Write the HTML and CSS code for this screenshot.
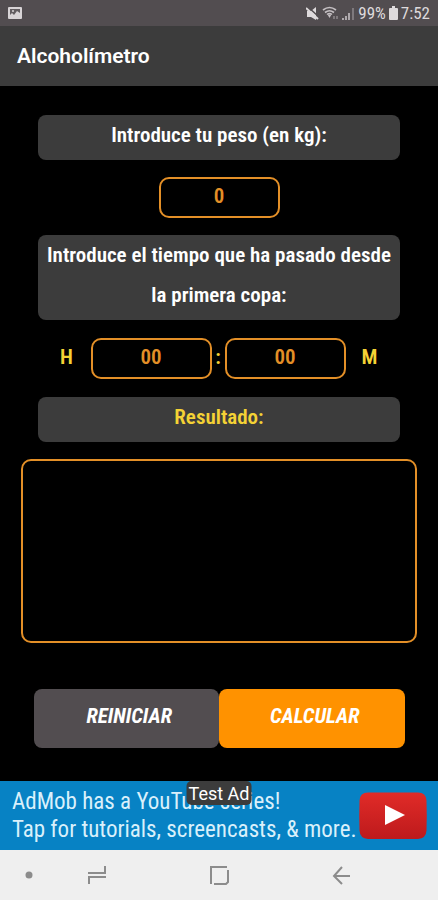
FILE: index.html
```html
<!DOCTYPE html>
<html lang="es">
<head>
<meta charset="utf-8">
<meta name="viewport" content="width=device-width, initial-scale=1">
<title>Alcoholímetro</title>
<link rel="stylesheet" href="styles.css">
</head>
<body>
<div class="status">
  <svg class="status-picture" width="14" height="12" viewBox="0 0 14 12" aria-hidden="true"><rect width="14" height="12" rx="1" fill="#d8d4d6"/><path d="M2 2h10v4L9 4 6 8 4 6 2 8z" fill="#625d60"/><circle cx="5" cy="4" r="1" fill="#d8d4d6"/></svg>
  <div class="status-right">
    <svg width="13" height="13" viewBox="0 0 13 13" aria-hidden="true"><path d="M1 4h4l5-4v13L5 10H1z" fill="#dedadc"/><path d="M2 0l11 10" stroke="#524d50" stroke-width="1.500"/><path d="M0 1l12 11" stroke="#dedadc" stroke-width="2"/></svg>
    <svg width="17" height="14" viewBox="0 0 17 14" fill="none" stroke="#c5c0c3" stroke-width="1.600" aria-hidden="true"><path d="M1 4q6.500-5 13 0M3 6.500q4.500-3.500 9 0M5 8.500q2.500-2 5 0"/><path d="M5.500 8.500h4L7.500 12z" fill="#c5c0c3" stroke="none"/><path d="M12 10v3M15 10v3" stroke="#8b8689"/></svg>
    <svg width="13" height="13" viewBox="0 0 13 13" stroke="#c5c0c3" stroke-width="1.600" aria-hidden="true"><path d="M1 11v2M4 9v4M7 6v7"/><path d="M11 1v12" stroke="#8b8689"/></svg>
    <span>99%</span>
    <svg width="9" height="14" viewBox="0 0 9 14" aria-hidden="true"><path d="M3 0h3v2h2q1 0 1 1v10q0 1-1 1H1q-1 0-1-1V3q0-1 1-1h2z" fill="#dedadc"/></svg>
    <span>7:52</span>
  </div>
</div>
<header class="appbar"><h1>Alcoholímetro</h1></header>
<main>
  <form class="form">
    <label class="panel" for="peso">Introduce tu peso (en kg):</label>
    <input class="field" id="peso" type="text" inputmode="decimal" value="0">
    <label class="panel" for="horas">Introduce el tiempo que ha pasado desde la primera copa:</label>
    <div class="time">
      <label class="unit" for="horas">H</label>
      <input class="field" id="horas" type="text" inputmode="numeric" value="00">
      <span class="colon">:</span>
      <input class="field" id="minutos" type="text" inputmode="numeric" value="00">
      <label class="unit" for="minutos">M</label>
    </div>
    <label class="panel panel-result" for="resultado">Resultado:</label>
    <output class="result" id="resultado"></output>
    <div class="actions">
      <button class="action" type="reset">REINICIAR</button>
      <button class="action action-main" type="button">CALCULAR</button>
    </div>
  </form>
</main>
<a class="ad" href="#">
  <span class="ad-text">AdMob has a YouTube series!<br>Tap for tutorials, screencasts, &amp; more.</span>
  <span class="ad-tag">Test Ad</span>
  <svg width="68" height="48" viewBox="0 0 68 48" aria-hidden="true"><defs><linearGradient id="red" x2="0" y2="1"><stop stop-color="#e12b28"/><stop offset="1" stop-color="#bd1a1c"/></linearGradient></defs><path d="M9 .5h50q8 0 8.500 8 .5 15 0 30-.5 8-8.500 8.500H9q-8-.5-8.500-8.500-.5-15 0-30Q1 .5 9 .5z" fill="url(#red)"/><path d="M26 13l20 10-20 10z" fill="#fff"/></svg>
</a>
<nav class="nav">
  <svg class="dot" width="8" height="8" viewBox="0 0 8 8" aria-hidden="true"><circle cx="4" cy="4" r="3.500" fill="#8c8c8c"/></svg>
  <button type="button" aria-label="Recientes"><svg width="20" height="20" viewBox="0 0 20 20"><path d="M1 8h17V1M2 19v-7h17"/></svg></button>
  <button type="button" aria-label="Inicio"><svg width="20" height="20" viewBox="0 0 20 20"><path d="M18 2H2v17M5 19h12l2-2V5"/></svg></button>
  <button type="button" aria-label="Atrás"><svg width="20" height="20" viewBox="0 0 20 20"><path d="M19 11H3M11 2l-8 9 8 8"/></svg></button>
</nav>
</body>
</html>
```
FILE: styles.css
```css
* { box-sizing: border-box; }

body {
  margin: 0;
  min-height: 100vh;
  display: flex;
  flex-direction: column;
  background: #000;
  color: #fff;
  font-family: "Roboto Condensed", "Liberation Sans Narrow", Roboto, sans-serif;
}

.status {
  display: flex;
  justify-content: space-between;
  align-items: center;
  height: 26px;
  padding: 0 8px;
  background: #524d50;
  color: #dedadc;
  font-size: 17px;
}

.status-right { display: flex; align-items: center; gap: 3px; }

.appbar {
  display: flex;
  align-items: center;
  height: 60px;
  padding: 0 17px;
  background: #3c3c3c;
}

h1 {
  margin: 0;
  font: 600 21px/28px Roboto, sans-serif;
}

main { flex: 1; padding: 29px 21px 32px; }

.form { display: flex; flex-direction: column; align-items: center; }

.panel {
  width: calc(100% - 34px);
  padding: 0 4px 5px;
  border-radius: 8px;
  background: #3c3c3c;
  font-size: 21px;
  font-weight: 600;
  line-height: 40px;
  text-align: center;
}

.panel-result { color: #f4d235; }

.field {
  width: 121px;
  height: 41px;
  margin: 17px 0;
  padding: 0 0 4px;
  border: 2px solid #e38f27;
  border-radius: 10px;
  background: #000;
  color: #e38f27;
  font: inherit;
  font-size: 21px;
  font-weight: 600;
  text-align: center;
}

.time {
  display: flex;
  align-items: center;
  justify-content: center;
  width: 100%;
  padding: 1px 2px 1px 0;
  color: #f4d235;
  font-size: 21px;
  font-weight: 600;
}

.unit, .colon { padding-bottom: 4px; text-align: center; }
.unit { width: 48px; }
.colon { width: 13px; }

.result {
  width: 100%;
  height: 184px;
  margin: 17px 0 46px;
  border: 2px solid #e38f27;
  border-radius: 10px;
}

.actions { display: flex; width: calc(100% - 25px); }

.action {
  flex: 1;
  height: 59px;
  padding: 0 0 5px 6px;
  border: 0;
  border-radius: 8px;
  background: #524d50;
  color: #fff;
  font: italic 700 21px/32px "Roboto Condensed", "Liberation Sans Narrow", Roboto, sans-serif;
}

.action-main { background: #ff9200; }

.ad {
  position: relative;
  display: flex;
  align-items: center;
  justify-content: space-between;
  height: 69px;
  padding: 0 11px 0 12px;
  background: #0782c4;
  color: #d9f0fb;
  font-size: 23px;
  line-height: 28px;
  text-decoration: none;
  white-space: nowrap;
}

.ad-tag {
  position: absolute;
  top: 0;
  left: 50%;
  transform: translateX(-50%);
  padding: 2px 2px 0;
  border-radius: 5px;
  background: #3c3c3c;
  color: #fff;
  font: 18px/22px Roboto, sans-serif;
}

.nav {
  position: relative;
  display: flex;
  align-items: center;
  justify-content: center;
  gap: 82px;
  height: 50px;
  background: #efefef;
}

.dot { position: absolute; left: 25px; }

.nav button {
  display: flex;
  justify-content: center;
  width: 40px;
  padding: 10px 0;
  border: 0;
  background: none;
  fill: none;
  stroke: #8c8c8c;
  stroke-width: 2;
}
```
